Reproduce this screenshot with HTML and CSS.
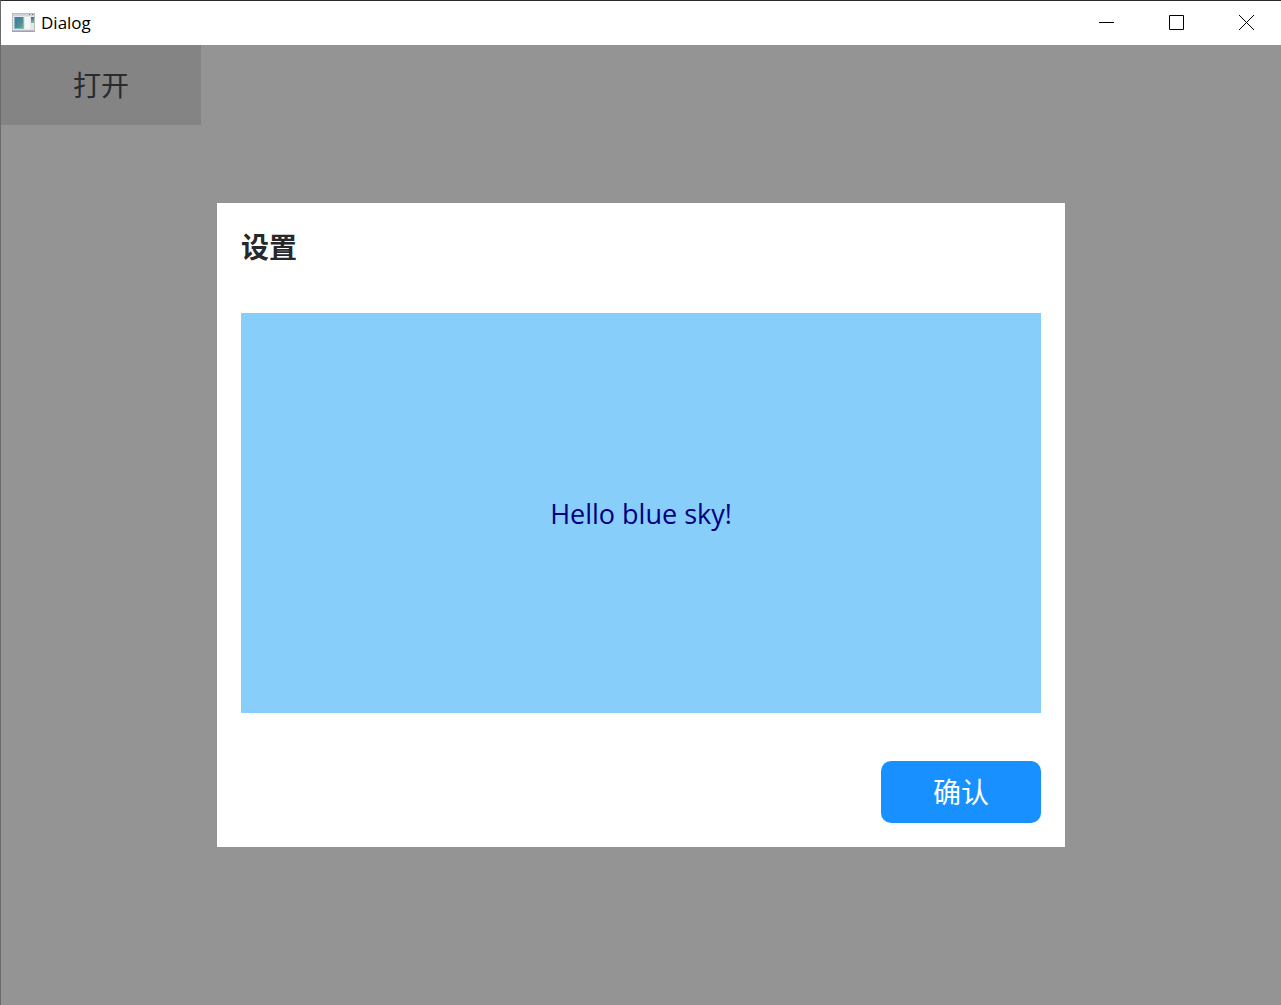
FILE: index.html
```html
<!DOCTYPE html>
<html lang="zh-CN">
<head>
<meta charset="utf-8">
<title>Dialog</title>
<link rel="stylesheet" href="styles.css">
</head>
<body>
<div class="window">
  <header class="titlebar">
    <svg class="app-icon" width="24" height="20" viewBox="0 0 24 20" aria-hidden="true">
      <defs>
        <linearGradient id="pane" x1="0" y1="0" x2="1" y2="1">
          <stop offset="0" stop-color="#4676a8"/>
          <stop offset="0.55" stop-color="#4a8a98"/>
          <stop offset="1" stop-color="#62b47c"/>
        </linearGradient>
        <linearGradient id="side" x1="0" y1="0" x2="0" y2="1">
          <stop offset="0" stop-color="#3f68a8"/>
          <stop offset="1" stop-color="#7cc08c"/>
        </linearGradient>
      </defs>
      <rect x="0" y="0" width="23" height="19" fill="#b9bdc0"/>
      <rect x="1" y="1" width="21" height="2" fill="#d0d4da"/>
      <rect x="17" y="1" width="1" height="1" fill="#667"/>
      <rect x="20" y="1" width="1" height="1" fill="#667"/>
      <rect x="1" y="3" width="21" height="14" fill="#e4e7ea"/>
      <rect x="2" y="4" width="10" height="12" fill="#8cb6c4"/>
      <rect x="3" y="4" width="8" height="11" fill="url(#pane)"/>
      <rect x="13" y="4" width="5" height="12" fill="#f6f6f6"/>
      <rect x="19" y="4" width="3" height="6" fill="url(#side)"/>
      <rect x="0" y="18" width="23" height="1" fill="#a0a4a8"/>
    </svg>
    <span class="title">Dialog</span>
    <div class="caption-buttons">
      <button class="caption-button" type="button" aria-label="Minimize">
        <svg width="15" height="15" viewBox="0 0 15 15"><path d="M0 7.5H15"/></svg>
      </button>
      <button class="caption-button" type="button" aria-label="Maximize">
        <svg width="15" height="15" viewBox="0 0 15 15"><path d="M.5 .5H14.5V14.5H.5Z"/></svg>
      </button>
      <button class="caption-button" type="button" aria-label="Close">
        <svg width="15" height="15" viewBox="0 0 15 15"><path d="M0 0L15 15M15 0L0 15"/></svg>
      </button>
    </div>
  </header>
  <main class="client">
    <div class="page">
      <button class="open-button" type="button">打开</button>
    </div>
    <div class="overlay">
      <section class="dialog" role="dialog" aria-labelledby="dialog-title">
        <h1 class="dialog-title" id="dialog-title">设置</h1>
        <div class="dialog-content">Hello blue sky!</div>
        <footer class="dialog-footer">
          <button class="confirm-button" type="button">确认</button>
        </footer>
      </section>
    </div>
  </main>
</div>
</body>
</html>
```
FILE: styles.css
```css
* {
  box-sizing: border-box;
}

body {
  margin: 0;
  color: #26282a;
  font-family: "Open Sans", "Noto Sans CJK SC", sans-serif;
}

button {
  border: 0;
  padding: 0 0 2px;
  color: inherit;
  font: inherit;
}

.window {
  display: flex;
  flex-direction: column;
  min-height: 100vh;
  border-top: 1px solid #2b292b;
  border-left: 1px solid #6a6a6a;
}

.titlebar {
  display: flex;
  align-items: center;
  height: 44px;
  padding-left: 11px;
  background: #fff;
  color: #000;
}

.title {
  flex: 1;
  padding-left: 5px;
  font-size: 17px;
  line-height: 24px;
}

.caption-buttons {
  display: flex;
}

.caption-button {
  display: grid;
  place-items: center;
  width: 70px;
  height: 44px;
  background: transparent;
}

.caption-button path {
  fill: none;
  stroke: #000;
}

.client {
  display: grid;
  flex: 1;
}

.page,
.overlay {
  grid-area: 1 / 1;
}

.page {
  background: #fff;
}

.open-button {
  display: block;
  width: 200px;
  height: 80px;
  background: #e4e4e4;
  color: #484a4d;
  font-family: "Noto Sans CJK SC", sans-serif;
  font-size: 28px;
}

.overlay {
  display: grid;
  place-items: center;
  background: rgb(0 0 0 / 42%);
}

.dialog {
  width: 848px;
  max-width: 100%;
  padding: 24px;
  background: #fff;
}

.dialog-title {
  margin: 0 0 48px;
  font-family: "Noto Sans CJK SC", sans-serif;
  font-size: 28px;
  line-height: 38px;
}

.dialog-content {
  display: grid;
  place-items: center;
  height: 400px;
  background: #87cefa;
  color: #000080;
  font-size: 27px;
}

.dialog-footer {
  display: flex;
  justify-content: flex-end;
  padding-top: 48px;
}

.confirm-button {
  width: 160px;
  height: 62px;
  border-radius: 10px;
  background: #1890ff;
  color: #fff;
  font-family: "Noto Sans CJK SC", sans-serif;
  font-size: 28px;
}
```
